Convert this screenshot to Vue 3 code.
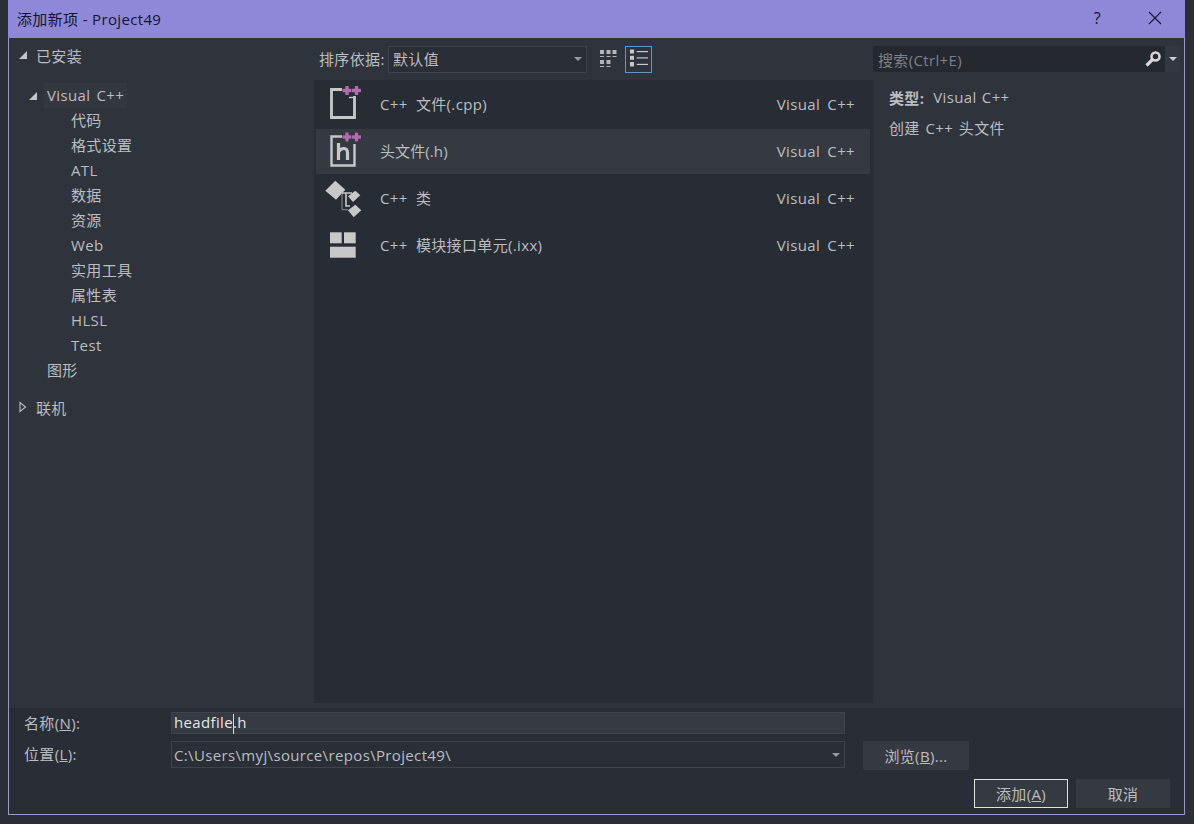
<template>
  <div class="screen">
    <div class="dialog">
      <!-- title bar -->
      <div class="titlebar">
        <span class="title">添加新项 - Project49</span>
        <div class="title-btns">
          <span class="help">?</span>
          <svg class="close" width="14" height="14" viewBox="0 0 14 14">
            <path d="M1 1 L13 13 M13 1 L1 13" stroke="#16162e" stroke-width="1.1" fill="none" />
          </svg>
        </div>
      </div>

      <div class="body">
        <!-- left tree -->
        <div class="tree">
          <div class="tree-root">
            <svg class="arrow" width="10" height="10" viewBox="0 0 10 10"><path d="M9 1 V9 H1 Z" fill="#c4c4c4" /></svg>
            <span>已安装</span>
          </div>
          <div class="tree-lang">
            <svg class="arrow" width="10" height="10" viewBox="0 0 10 10"><path d="M9 1 V9 H1 Z" fill="#c4c4c4" /></svg>
            <span class="lang-sel">Visual C++</span>
          </div>
          <div v-for="t in treeItems" :key="t" class="tree-item">{{ t }}</div>
          <div class="tree-graph">图形</div>
          <div class="tree-online">
            <svg class="arrow" width="10" height="12" viewBox="0 0 10 12"><path d="M2 1.5 L7.5 6 L2 10.5 Z" fill="none" stroke="#b4b4b8" stroke-width="1.2" /></svg>
            <span>联机</span>
          </div>
        </div>

        <!-- centre -->
        <div class="center">
          <div class="sortbar">
            <span class="sort-label">排序依据:</span>
            <div class="select sort-select">
              <span>默认值</span>
              <i class="caret"></i>
            </div>
            <div class="view-btn grid-btn">
              <svg width="18" height="18" viewBox="0 0 18 18" fill="#b4b4b4">
                <rect x="1" y="0" width="4" height="4" /><rect x="7.5" y="0" width="4" height="4" /><rect x="13.5" y="0" width="4" height="4" />
                <rect x="1" y="6" width="4" height="1" /><rect x="7.5" y="6" width="4" height="1" /><rect x="13.5" y="6" width="4" height="1" />
                <rect x="1" y="10" width="4" height="4" /><rect x="7.5" y="10" width="4" height="4" />
                <rect x="1" y="16" width="4" height="1" /><rect x="7.5" y="16" width="4" height="1" />
              </svg>
            </div>
            <div class="view-btn active">
              <svg width="20" height="20" viewBox="0 0 20 20" fill="#c8c8c8">
                <rect x="1" y="0.5" width="4" height="4" /><rect x="1" y="6.8" width="4" height="4" /><rect x="1" y="13" width="4" height="4.5" />
                <rect x="7.7" y="2" width="11.3" height="1.2" /><rect x="7.7" y="8.3" width="11.3" height="1.2" /><rect x="7.7" y="14.8" width="11.3" height="1.2" />
              </svg>
            </div>
          </div>

          <div class="list">
            <div v-for="it in files" :key="it.name" class="row" :class="{ selected: it.selected }">
              <div class="row-icon">
                <svg v-if="it.icon === 'cpp'" width="40" height="47" viewBox="0 0 40 47">
                  <path d="M16 8.5 H5.5 V36.5 H28.5 V15" fill="none" stroke="#c8c8c8" stroke-width="2.8" />
                  <path d="M23 16.5 H27" stroke="#c8c8c8" stroke-width="1.4" />
                  <path :d="plus(21, 9.5) + plus(30.5, 9.5)" class="plus" />
                </svg>
                <svg v-else-if="it.icon === 'h'" width="40" height="47" viewBox="0 0 40 47">
                  <path d="M16 8.5 H5.5 V37.5 H28.5 V16" fill="none" stroke="#c8c8c8" stroke-width="2.4" />
                  <path d="M12.5 15 V32 M12.5 24 Q14 20.5 18 20.5 Q21.5 20.5 21.5 25 V32" fill="none" stroke="#c8c8c8" stroke-width="3.2" />
                  <path :d="plus(21, 9) + plus(30.5, 9)" class="plus" />
                </svg>
                <svg v-else-if="it.icon === 'class'" width="40" height="47" viewBox="0 0 40 47">
                  <path d="M-0.7 15.7 L9.3 5.7 L19.3 14.7 L10 24.7 Z" fill="#c8c8c8" />
                  <path d="M29.3 15.7 L34.3 20.3 L27 27 L22 21.3 Z" fill="#c8c8c8" />
                  <path d="M29.3 29.7 L35.3 35.3 L27.7 42.3 L22 35.3 Z" fill="#c8c8c8" />
                  <path d="M16 18 V34.7 H22" fill="none" stroke="#8a8d92" stroke-width="1" />
                  <path d="M16 18 H26 M20 18 V31 H24" fill="none" stroke="#c8c8c8" stroke-width="1.6" />
                </svg>
                <svg v-else width="40" height="47" viewBox="0 0 40 47" fill="#c8c8c8">
                  <rect x="4" y="10.3" width="11.7" height="11" />
                  <rect x="18" y="10.3" width="11.7" height="11" />
                  <rect x="4" y="24.7" width="25.7" height="11" />
                </svg>
              </div>
              <span class="row-name">{{ it.name }}</span>
              <span class="row-lang">Visual C++</span>
            </div>
          </div>
        </div>

        <!-- right -->
        <div class="side">
          <div class="search">
            <div class="search-box">
              <span class="search-ph">搜索(Ctrl+E)</span>
              <svg width="18" height="18" viewBox="0 0 18 18">
                <circle cx="11.5" cy="6.5" r="4" fill="none" stroke="#d6d6d6" stroke-width="2.6" />
                <path d="M8.5 9.5 L2.5 15.5" stroke="#d6d6d6" stroke-width="3.2" />
              </svg>
            </div>
            <div class="search-drop"><i class="caret light"></i></div>
          </div>
          <div class="details">
            <div class="type-row"><b>类型:</b><span>Visual C++</span></div>
            <div class="desc">创建 C++ 头文件</div>
          </div>
        </div>
      </div>

      <!-- bottom form -->
      <div class="form">
        <div class="form-row">
          <label class="form-label">名称(<u>N</u>):</label>
          <div class="input name-input">
            <span class="input-text">headfile<i class="cursor"></i>.h</span>
          </div>
        </div>
        <div class="form-row second">
          <label class="form-label">位置(<u>L</u>):</label>
          <div class="select loc-select">
            <span>C:\Users\myj\source\repos\Project49\</span>
            <i class="caret"></i>
          </div>
          <button class="btn browse">浏览(<u>B</u>)...</button>
        </div>
        <div class="form-actions">
          <button class="btn primary">添加(<u>A</u>)</button>
          <button class="btn">取消</button>
        </div>
      </div>
    </div>
  </div>
</template>

<script setup>
const treeItems = ['代码', '格式设置', 'ATL', '数据', '资源', 'Web', '实用工具', '属性表', 'HLSL', 'Test']

const files = [
  { name: 'C++ 文件(.cpp)', icon: 'cpp' },
  { name: '头文件(.h)', icon: 'h', selected: true },
  { name: 'C++ 类', icon: 'class' },
  { name: 'C++ 模块接口单元(.ixx)', icon: 'ixx' }
]

// small purple plus sign of the template icons
const plus = (x, y) =>
  `M${x - 1.7} ${y - 4.5} h3.4 v2.8 h2.8 v3.4 h-2.8 v2.8 h-3.4 v-2.8 h-2.8 v-3.4 h2.8 Z `
</script>

<style>
html, body {
  margin: 0;
  background: #2b2e34;
}
</style>

<style scoped>
.screen {
  width: 1194px;
  height: 824px;
  overflow: hidden;
  background: #2b2e34;
  font-family: "Open Sans", "Noto Sans CJK SC", sans-serif;
  font-size: 15px;
  letter-spacing: 0.35px;
  color: #bcbdc0;
}
.dialog {
  margin-left: 8px;
  width: 1177px;
  height: 815px;
  box-sizing: border-box;
  border: 1px solid #9c99c9;
  border-top: none;
  display: flex;
  flex-direction: column;
  background: #2f333b;
}
.titlebar {
  height: 38px;
  margin: 0 -1px;
  flex-shrink: 0;
  background: #8f88d8;
  color: #14142c;
  display: flex;
  align-items: center;
  justify-content: space-between;
  padding: 0 23px 2px 9px;
  box-sizing: border-box;
}
.title {
  font-size: 15px;
}
.title-btns {
  display: flex;
  align-items: center;
  gap: 47px;
}
.help {
  font-size: 16px;
}
.close {
  display: block;
}
.body {
  flex: 1;
  min-height: 0;
  display: flex;
  padding-bottom: 5px;
}
.tree {
  width: 305px;
  flex-shrink: 0;
  padding-top: 6px;
  box-sizing: border-box;
}
.tree-root,
.tree-online {
  height: 22px;
  display: flex;
  align-items: center;
  padding-left: 9px;
  gap: 8px;
}
.arrow {
  flex-shrink: 0;
}
.tree-lang {
  margin-top: 17px;
  height: 25px;
  display: flex;
  align-items: center;
  padding-left: 19px;
  gap: 6px;
}
.lang-sel {
  background: #33373f;
  height: 25px;
  line-height: 25px;
  padding: 0 3px;
  word-spacing: 2px;
}
.tree-item {
  height: 25px;
  line-height: 25px;
  padding-left: 62px;
}
.tree-graph {
  height: 25px;
  line-height: 25px;
  padding-left: 38px;
}
.tree-online {
  margin-top: 13px;
}
.center {
  width: 559px;
  flex-shrink: 0;
  display: flex;
  flex-direction: column;
}
.sortbar {
  height: 42px;
  flex-shrink: 0;
  display: flex;
  align-items: center;
  padding: 0 0 0 5px;
  box-sizing: border-box;
}
.sort-label {
  width: 69px;
  flex-shrink: 0;
  padding-bottom: 2px;
}
.select {
  box-sizing: border-box;
  border: 1px solid #3f434c;
  background: #2a2e36;
  display: flex;
  align-items: center;
  justify-content: space-between;
  padding: 0 4px 0 3px;
}
.sort-select {
  width: 199px;
  height: 27px;
  margin-right: 7px;
  padding-left: 4px;
}
.sort-select span {
  padding-bottom: 2px;
}
.caret {
  width: 0;
  height: 0;
  border-left: 4px solid transparent;
  border-right: 4px solid transparent;
  border-top: 4px solid #9a9a9a;
}
.caret.light {
  border-top-color: #d0d0d0;
}
.view-btn {
  width: 27px;
  height: 27px;
  box-sizing: border-box;
  border: 1px solid transparent;
  display: flex;
  align-items: center;
  justify-content: center;
}
.grid-btn {
  margin-right: 4px;
}
.view-btn.active {
  border-color: #5b9ac8;
}
.list {
  flex: 1;
  background: #282c34;
  padding-top: 1px;
}
.row {
  height: 47px;
  display: flex;
  align-items: center;
  padding: 0 18px 0 12px;
}
.row.selected {
  background: #353941;
  height: 45px;
  margin: 1px 3px 1px 2px;
  padding: 0 15px 0 10px;
}
.row-icon {
  width: 54px;
  flex-shrink: 0;
  display: flex;
  align-items: center;
}
.row-icon svg {
  display: block;
  flex-shrink: 0;
  overflow: visible;
}
.plus {
  fill: #b06cac;
  stroke: #24272e;
  stroke-width: 1;
  paint-order: stroke;
}
.row-name,
.row-lang {
  padding-bottom: 2px;
}
.row-name {
  flex: 1;
  word-spacing: 4px;
}
.selected .row-name {
  letter-spacing: 0.1px;
}
.row-lang {
  word-spacing: 3px;
}
.side {
  flex: 1;
  min-width: 0;
  display: flex;
  flex-direction: column;
}
.search {
  height: 42px;
  flex-shrink: 0;
  display: flex;
  align-items: flex-start;
  padding-top: 8px;
  box-sizing: border-box;
}
.search-box {
  width: 292px;
  height: 26px;
  background: #25282f;
  display: flex;
  align-items: center;
  justify-content: space-between;
  padding: 0 3px 0 5px;
  box-sizing: border-box;
}
.search-ph {
  color: #7d8087;
}
.search-drop {
  width: 15px;
  height: 26px;
  background: #33373f;
  display: flex;
  align-items: center;
  justify-content: center;
}
.details {
  padding: 5px 16px;
}
.type-row {
  display: flex;
  gap: 9px;
  height: 24px;
  align-items: center;
  word-spacing: 1px;
}
.type-row b {
  font-weight: 700;
}
.desc {
  margin-top: 7px;
  height: 24px;
  line-height: 24px;
  word-spacing: 1.5px;
}
.form {
  height: 106px;
  flex-shrink: 0;
  background: #292d35;
  box-sizing: border-box;
  padding: 3px 14px 0 15px;
  display: flex;
  flex-direction: column;
}
.form-row {
  display: flex;
  align-items: center;
  height: 23px;
}
.form-row.second {
  height: 29px;
  margin-top: 7px;
  align-items: flex-start;
}
.second .form-label {
  line-height: 27px;
}
.form-label {
  width: 147px;
  flex-shrink: 0;
}
.input {
  width: 674px;
  height: 22px;
  box-sizing: border-box;
  background: #363a42;
  border: 1px solid #3f434c;
  display: flex;
  align-items: center;
  padding-left: 2px;
  color: #e6e6e6;
}
.input-text {
  font-size: 15px;
}
.cursor {
  display: inline-block;
  width: 1px;
  height: 20px;
  background: #d8d8d8;
  margin-right: -1px;
  vertical-align: middle;
}
.loc-select {
  width: 674px;
  height: 27px;
  padding-left: 2px;
}
.btn {
  width: 94px;
  height: 29px;
  background: #353941;
  border: 1px solid #353941;
  color: #bcbdc0;
  font-family: inherit;
  font-size: 15px;
  letter-spacing: inherit;
  padding: 0;
  box-sizing: border-box;
}
.browse {
  width: 106px;
  margin-left: 18px;
}
.form-actions {
  display: flex;
  justify-content: flex-end;
  gap: 8px;
  margin-top: 9px;
}
.btn.primary {
  border-color: #e0e0e0;
}
</style>
